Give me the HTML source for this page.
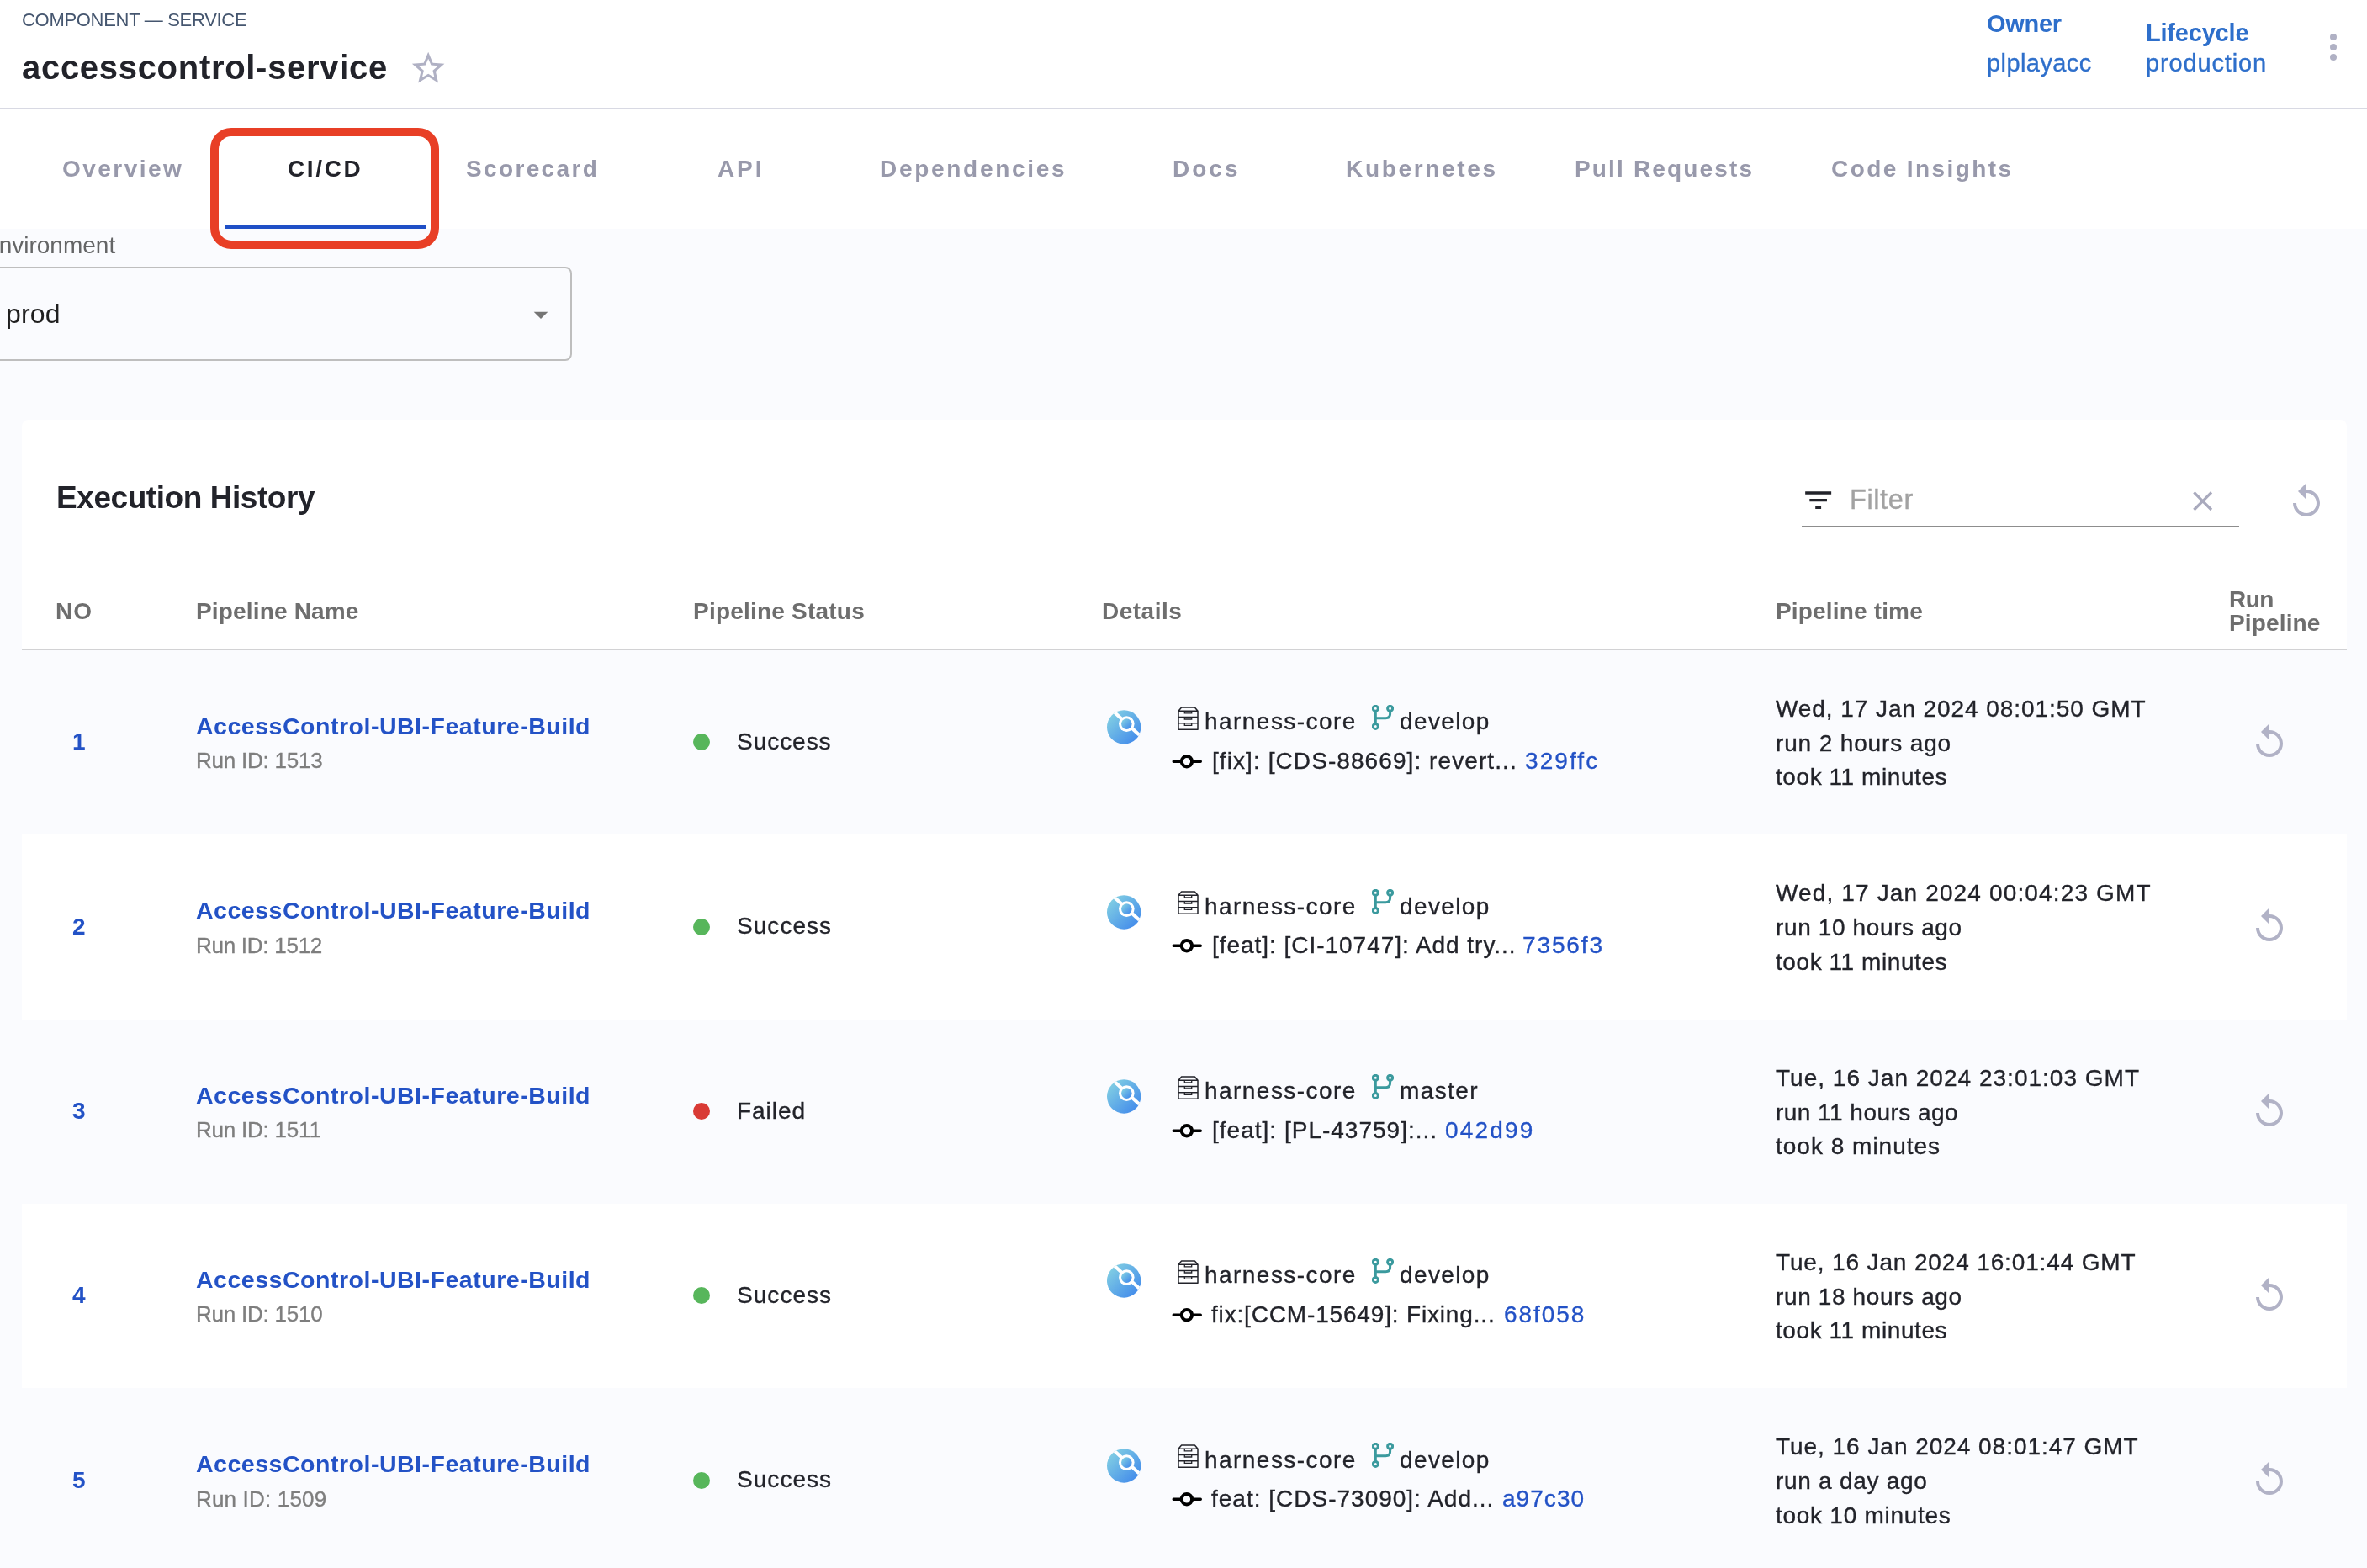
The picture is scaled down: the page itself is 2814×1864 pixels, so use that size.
<!DOCTYPE html>
<html><head><meta charset="utf-8"><title>accesscontrol-service CI/CD</title>
<style>
html,body{margin:0;padding:0;width:2814px;height:1864px;overflow:hidden;background:#fafbfe;}
body{position:relative;font-family:"Liberation Sans",sans-serif;}
.t{position:absolute;white-space:nowrap;will-change:transform;}
.r{-webkit-text-stroke:0.35px currentColor;}
.b{position:absolute;display:block;}
</style></head><body>
<div class="b" style="left:0;top:0;width:2814px;height:272px;background:#fff"></div>
<div class="b" style="left:0;top:128px;width:2814px;height:2px;background:#d8d9e3"></div>
<div class="t" id="comp" style="left:26.0px;top:13.4px;font-size:22px;line-height:22px;color:#45566f;font-weight:400;letter-spacing:-0.300px;">COMPONENT — SERVICE</div>
<div class="t" id="title" style="left:26.0px;top:60.1px;font-size:40px;line-height:40px;color:#22232a;font-weight:700;letter-spacing:0.700px;">accesscontrol-service</div>
<svg class="b" style="left:485.6px;top:57.6px;" width="46.3" height="46.3" viewBox="0 0 24 24"><path d="M22 9.24l-7.19-.62L12 2 9.19 8.63 2 9.24l5.46 4.73L5.82 21 12 17.27 18.18 21l-1.63-7.03L22 9.24zM12 15.4l-3.76 2.27 1-4.28-3.32-2.88 4.38-.38L12 6.1l1.71 4.04 4.38.38-3.32 2.88 1 4.28L12 15.4z" fill="#b0b1c4"/></svg>
<div class="t" id="owner" style="left:2362.4px;top:14.3px;font-size:29px;line-height:29px;color:#2e6fcb;font-weight:700;letter-spacing:-0.300px;">Owner</div>
<div class="t r" id="ownerv" style="left:2362.4px;top:61.4px;font-size:29px;line-height:29px;color:#2e6fcb;font-weight:400;letter-spacing:0.425px;">plplayacc</div>
<div class="t" id="life" style="left:2551.0px;top:25.4px;font-size:29px;line-height:29px;color:#2e6fcb;font-weight:700;letter-spacing:-0.200px;">Lifecycle</div>
<div class="t r" id="lifev" style="left:2551.0px;top:60.7px;font-size:29px;line-height:29px;color:#2e6fcb;font-weight:400;letter-spacing:0.844px;">production</div>
<div class="b" style="left:2770px;top:40.2px;width:8px;height:8px;border-radius:50%;background:#b0b1c4"></div>
<div class="b" style="left:2770px;top:52.2px;width:8px;height:8px;border-radius:50%;background:#b0b1c4"></div>
<div class="b" style="left:2770px;top:64.2px;width:8px;height:8px;border-radius:50%;background:#b0b1c4"></div>
<div class="t" id="tab0" style="left:74.0px;top:187.3px;font-size:28px;line-height:28px;color:#9899ab;font-weight:700;letter-spacing:2.457px;">Overview</div>
<div class="t" id="tab1" style="left:341.6px;top:187.3px;font-size:28px;line-height:28px;color:#22232a;font-weight:700;letter-spacing:2.650px;">CI/CD</div>
<div class="t" id="tab2" style="left:554.0px;top:187.3px;font-size:28px;line-height:28px;color:#9899ab;font-weight:700;letter-spacing:2.350px;">Scorecard</div>
<div class="t" id="tab3" style="left:852.6px;top:187.3px;font-size:28px;line-height:28px;color:#9899ab;font-weight:700;letter-spacing:2.900px;">API</div>
<div class="t" id="tab4" style="left:1045.8px;top:187.3px;font-size:28px;line-height:28px;color:#9899ab;font-weight:700;letter-spacing:2.709px;">Dependencies</div>
<div class="t" id="tab5" style="left:1394.0px;top:187.3px;font-size:28px;line-height:28px;color:#9899ab;font-weight:700;letter-spacing:3.000px;">Docs</div>
<div class="t" id="tab6" style="left:1600.0px;top:187.3px;font-size:28px;line-height:28px;color:#9899ab;font-weight:700;letter-spacing:2.667px;">Kubernetes</div>
<div class="t" id="tab7" style="left:1872.0px;top:187.3px;font-size:28px;line-height:28px;color:#9899ab;font-weight:700;letter-spacing:2.167px;">Pull Requests</div>
<div class="t" id="tab8" style="left:2177.0px;top:187.3px;font-size:28px;line-height:28px;color:#9899ab;font-weight:700;letter-spacing:2.417px;">Code Insights</div>
<div class="b" style="left:267px;top:268px;width:240px;height:4px;background:#1f4fc6"></div>
<div class="b" style="left:0;top:272px;width:2814px;height:1592px;background:#fafbfe"></div>
<div class="t" id="env" style="right:2676.7px;top:278.1px;font-size:28px;line-height:28px;color:#646566;font-weight:400;letter-spacing:0.000px;">Environment</div>
<div class="b" style="left:-12px;top:317px;width:692px;height:112px;box-sizing:border-box;border:2px solid #bebebe;border-radius:8px"></div>
<div class="t" id="prod" style="left:6.9px;top:356.9px;font-size:32px;line-height:32px;color:#1f1f1f;font-weight:400;letter-spacing:0.133px;">prod</div>
<svg class="b" style="left:623px;top:354px;" width="40" height="40" viewBox="0 0 24 24"><path d="M7 10l5 5 5-5z" fill="#757575"/></svg>
<div class="b" style="left:26px;top:499px;width:2764px;height:1400px;background:#fff;border-radius:8px"></div>
<div class="t" id="exh" style="left:66.5px;top:573.2px;font-size:37px;line-height:37px;color:#22232a;font-weight:700;letter-spacing:-0.438px;">Execution History</div>
<svg class="b" style="left:2140.8px;top:574.3px;" width="41.3" height="41.3" viewBox="0 0 24 24"><path d="M10 18h4v-2h-4v2zM3 6v2h18V6H3zm3 7h12v-2H6v2z" fill="#22232a"/></svg>
<div class="t r" id="filter" style="left:2199.0px;top:577.5px;font-size:32.5px;line-height:32.5px;color:#a2a2a2;font-weight:400;letter-spacing:0.600px;">Filter</div>
<svg class="b" style="left:2598.8px;top:575.5px;" width="39.4" height="39.4" viewBox="0 0 24 24"><path d="M19 6.41L17.59 5 12 10.59 6.41 5 5 6.41 10.59 12 5 17.59 6.41 19 12 13.41 17.59 19 19 17.59 13.41 12z" fill="#a9aabd"/></svg>
<div class="b" style="left:2142px;top:624.5px;width:520px;height:2px;background:#8d8d8d"></div>
<svg class="b" style="left:2717.5px;top:571.5px;" width="48" height="48" viewBox="0 0 24 24"><path d="M12 5V1L7 6l5 5V7c3.31 0 6 2.69 6 6s-2.69 6-6 6-6-2.69-6-6H4c0 4.42 3.58 8 8 8s8-3.58 8-8-3.58-8-8-8z" fill="#b1b2c6"/></svg>
<div class="t" id="h0" style="left:66.0px;top:713.3px;font-size:28px;line-height:28px;color:#6e6e6e;font-weight:700;letter-spacing:1.000px;">NO</div>
<div class="t" id="h1" style="left:232.5px;top:713.3px;font-size:28px;line-height:28px;color:#6e6e6e;font-weight:700;letter-spacing:0.167px;">Pipeline Name</div>
<div class="t" id="h2" style="left:824.0px;top:713.3px;font-size:28px;line-height:28px;color:#6e6e6e;font-weight:700;letter-spacing:0.214px;">Pipeline Status</div>
<div class="t" id="h3" style="left:1310.0px;top:713.3px;font-size:28px;line-height:28px;color:#6e6e6e;font-weight:700;letter-spacing:0.500px;">Details</div>
<div class="t" id="h4" style="left:2111.0px;top:713.3px;font-size:28px;line-height:28px;color:#6e6e6e;font-weight:700;letter-spacing:0.167px;">Pipeline time</div>
<div class="t" id="h5" style="left:2650.0px;top:698.7px;font-size:28px;line-height:28px;color:#6e6e6e;font-weight:700;letter-spacing:-0.500px;">Run</div>
<div class="t" id="h6" style="left:2650.0px;top:726.8px;font-size:28px;line-height:28px;color:#6e6e6e;font-weight:700;letter-spacing:0.143px;">Pipeline</div>
<div class="b" style="left:26px;top:771px;width:2764px;height:2px;background:#d2d2d4"></div>
<div class="b" style="left:26px;top:773.0px;width:2764px;height:219.33px;background:#fafbfe"></div>
<div class="t" id="no0" style="left:85.6px;top:868.3px;font-size:28px;line-height:28px;color:#2352c6;font-weight:700;letter-spacing:0.000px;">1</div>
<div class="t" id="name0" style="left:232.6px;top:849.1px;font-size:28.5px;line-height:28.5px;color:#2352c6;font-weight:700;letter-spacing:0.520px;">AccessControl-UBI-Feature-Build</div>
<div class="t r" id="rid0" style="left:232.6px;top:891.2px;font-size:26px;line-height:26px;color:#7e7e7e;font-weight:400;letter-spacing:-0.218px;">Run ID: 1513</div>
<div class="b" style="left:824px;top:872.3px;width:20px;height:20px;border-radius:50%;background:#57b65b"></div>
<div class="t r" id="st0" style="left:876.3px;top:868.1px;font-size:28px;line-height:28px;color:#22232a;font-weight:400;letter-spacing:0.967px;">Success</div>
<svg class="b" style="left:1315.8px;top:844.3px;" width="41" height="41" viewBox="0 0 41 41"><defs><linearGradient id="dg0" x1="0" y1="0" x2="1" y2="1"><stop offset="0" stop-color="#8ad8e2"/><stop offset="1" stop-color="#3a82ec"/></linearGradient><clipPath id="dc0"><circle cx="20.2" cy="20.45" r="20.2"/></clipPath></defs>
<circle cx="20.2" cy="20.45" r="20.2" fill="url(#dg0)"/>
<line x1="4" y1="-1.6" x2="44" y2="34.7" stroke="#fff" stroke-width="4" clip-path="url(#dc0)"/>
<circle cx="23.3" cy="16.6" r="9.3" fill="#fff"/><circle cx="23.3" cy="16.6" r="6.3" fill="url(#dg0)"/></svg>
<svg class="b" style="left:1400px;top:840.0px;" width="25" height="28" viewBox="0 0 25 28"><path d="M1,27.2 V5.2 L4.6,1 H20.4 L24,5.2 V27.2 Z M1,5.2 H24 M1,12.4 H24 M1,19.8 H24" fill="none" stroke="#22232a" stroke-width="1.5" stroke-linejoin="round"/>
<path d="M8.3,5.4 V7.8 H16.7 V5.4 M8.3,12.6 V15 H16.7 V12.6 M8.3,20 V22.4 H16.7 V20" fill="none" stroke="#22232a" stroke-width="1.3"/></svg>
<div class="t r" id="repo0" style="left:1432.0px;top:844.3px;font-size:28px;line-height:28px;color:#22232a;font-weight:400;letter-spacing:1.455px;">harness-core</div>
<svg class="b" style="left:1631px;top:838.0px;" width="26" height="30" viewBox="0 0 26 30"><g fill="none" stroke="#3b9a9e" stroke-width="3"><circle cx="4.3" cy="4.3" r="3"/><circle cx="21.6" cy="4.3" r="3"/><circle cx="4.3" cy="25.4" r="3"/>
<path d="M4.3,7.3 V22.4 M21.6,7.3 V10.5 Q21.6,15.8 16.3,15.8 H4.3"/></g></svg>
<div class="t r" id="br0" style="left:1663.5px;top:844.3px;font-size:28px;line-height:28px;color:#22232a;font-weight:400;letter-spacing:1.367px;">develop</div>
<svg class="b" style="left:1393px;top:895.0px;" width="36" height="20" viewBox="0 0 36 20"><g fill="none" stroke="#000" ><circle cx="17.9" cy="10.2" r="6.2" stroke-width="4"/><path d="M2.2,10.2 H11.5 M24.3,10.2 H34.3" stroke-width="3.4" stroke-linecap="round"/></g></svg>
<div class="t r" id="msg0" style="left:1440.7px;top:891.1px;font-size:28px;line-height:28px;color:#22232a;font-weight:400;letter-spacing:1.079px;">[fix]: [CDS-88669]: revert...</div>
<div class="t r" id="sha0" style="left:1813.4px;top:891.1px;font-size:28px;line-height:28px;color:#2352c6;font-weight:400;letter-spacing:2.080px;">329ffc</div>
<div class="t r" id="tm0a" style="left:2111.0px;top:829.1px;font-size:28px;line-height:28px;color:#22232a;font-weight:400;letter-spacing:0.929px;">Wed, 17 Jan 2024 08:01:50 GMT</div>
<div class="t r" id="tm0b" style="left:2111.0px;top:869.8px;font-size:28px;line-height:28px;color:#22232a;font-weight:400;letter-spacing:0.857px;">run 2 hours ago</div>
<div class="t r" id="tm0c" style="left:2111.0px;top:910.2px;font-size:28px;line-height:28px;color:#22232a;font-weight:400;letter-spacing:0.571px;">took 11 minutes</div>
<svg class="b" style="left:2674px;top:858.0px;" width="48" height="48" viewBox="0 0 24 24"><path d="M12 5V1L7 6l5 5V7c3.31 0 6 2.69 6 6s-2.69 6-6 6-6-2.69-6-6H4c0 4.42 3.58 8 8 8s8-3.58 8-8-3.58-8-8-8z" fill="#b1b2c6"/></svg>
<div class="t" id="no1" style="left:85.6px;top:1087.6px;font-size:28px;line-height:28px;color:#2352c6;font-weight:700;letter-spacing:0.000px;">2</div>
<div class="t" id="name1" style="left:232.6px;top:1068.4px;font-size:28.5px;line-height:28.5px;color:#2352c6;font-weight:700;letter-spacing:0.520px;">AccessControl-UBI-Feature-Build</div>
<div class="t r" id="rid1" style="left:232.6px;top:1110.5px;font-size:26px;line-height:26px;color:#7e7e7e;font-weight:400;letter-spacing:-0.264px;">Run ID: 1512</div>
<div class="b" style="left:824px;top:1091.63px;width:20px;height:20px;border-radius:50%;background:#57b65b"></div>
<div class="t r" id="st1" style="left:876.3px;top:1087.4px;font-size:28px;line-height:28px;color:#22232a;font-weight:400;letter-spacing:1.050px;">Success</div>
<svg class="b" style="left:1315.8px;top:1063.63px;" width="41" height="41" viewBox="0 0 41 41"><defs><linearGradient id="dg1" x1="0" y1="0" x2="1" y2="1"><stop offset="0" stop-color="#8ad8e2"/><stop offset="1" stop-color="#3a82ec"/></linearGradient><clipPath id="dc1"><circle cx="20.2" cy="20.45" r="20.2"/></clipPath></defs>
<circle cx="20.2" cy="20.45" r="20.2" fill="url(#dg1)"/>
<line x1="4" y1="-1.6" x2="44" y2="34.7" stroke="#fff" stroke-width="4" clip-path="url(#dc1)"/>
<circle cx="23.3" cy="16.6" r="9.3" fill="#fff"/><circle cx="23.3" cy="16.6" r="6.3" fill="url(#dg1)"/></svg>
<svg class="b" style="left:1400px;top:1059.33px;" width="25" height="28" viewBox="0 0 25 28"><path d="M1,27.2 V5.2 L4.6,1 H20.4 L24,5.2 V27.2 Z M1,5.2 H24 M1,12.4 H24 M1,19.8 H24" fill="none" stroke="#22232a" stroke-width="1.5" stroke-linejoin="round"/>
<path d="M8.3,5.4 V7.8 H16.7 V5.4 M8.3,12.6 V15 H16.7 V12.6 M8.3,20 V22.4 H16.7 V20" fill="none" stroke="#22232a" stroke-width="1.3"/></svg>
<div class="t r" id="repo1" style="left:1432.0px;top:1063.6px;font-size:28px;line-height:28px;color:#22232a;font-weight:400;letter-spacing:1.455px;">harness-core</div>
<svg class="b" style="left:1631px;top:1057.33px;" width="26" height="30" viewBox="0 0 26 30"><g fill="none" stroke="#3b9a9e" stroke-width="3"><circle cx="4.3" cy="4.3" r="3"/><circle cx="21.6" cy="4.3" r="3"/><circle cx="4.3" cy="25.4" r="3"/>
<path d="M4.3,7.3 V22.4 M21.6,7.3 V10.5 Q21.6,15.8 16.3,15.8 H4.3"/></g></svg>
<div class="t r" id="br1" style="left:1663.5px;top:1063.6px;font-size:28px;line-height:28px;color:#22232a;font-weight:400;letter-spacing:1.367px;">develop</div>
<svg class="b" style="left:1393px;top:1114.33px;" width="36" height="20" viewBox="0 0 36 20"><g fill="none" stroke="#000" ><circle cx="17.9" cy="10.2" r="6.2" stroke-width="4"/><path d="M2.2,10.2 H11.5 M24.3,10.2 H34.3" stroke-width="3.4" stroke-linecap="round"/></g></svg>
<div class="t r" id="msg1" style="left:1441.0px;top:1110.4px;font-size:28px;line-height:28px;color:#22232a;font-weight:400;letter-spacing:0.966px;">[feat]: [CI-10747]: Add try...</div>
<div class="t r" id="sha1" style="left:1810.0px;top:1110.4px;font-size:28px;line-height:28px;color:#2352c6;font-weight:400;letter-spacing:1.880px;">7356f3</div>
<div class="t r" id="tm1a" style="left:2111.0px;top:1048.4px;font-size:28px;line-height:28px;color:#22232a;font-weight:400;letter-spacing:1.143px;">Wed, 17 Jan 2024 00:04:23 GMT</div>
<div class="t r" id="tm1b" style="left:2111.0px;top:1089.1px;font-size:28px;line-height:28px;color:#22232a;font-weight:400;letter-spacing:0.627px;">run 10 hours ago</div>
<div class="t r" id="tm1c" style="left:2111.0px;top:1129.5px;font-size:28px;line-height:28px;color:#22232a;font-weight:400;letter-spacing:0.571px;">took 11 minutes</div>
<svg class="b" style="left:2674px;top:1077.33px;" width="48" height="48" viewBox="0 0 24 24"><path d="M12 5V1L7 6l5 5V7c3.31 0 6 2.69 6 6s-2.69 6-6 6-6-2.69-6-6H4c0 4.42 3.58 8 8 8s8-3.58 8-8-3.58-8-8-8z" fill="#b1b2c6"/></svg>
<div class="b" style="left:26px;top:1211.66px;width:2764px;height:219.33px;background:#fafbfe"></div>
<div class="t" id="no2" style="left:85.6px;top:1307.0px;font-size:28px;line-height:28px;color:#2352c6;font-weight:700;letter-spacing:0.000px;">3</div>
<div class="t" id="name2" style="left:232.6px;top:1287.7px;font-size:28.5px;line-height:28.5px;color:#2352c6;font-weight:700;letter-spacing:0.520px;">AccessControl-UBI-Feature-Build</div>
<div class="t r" id="rid2" style="left:232.6px;top:1329.8px;font-size:26px;line-height:26px;color:#7e7e7e;font-weight:400;letter-spacing:-0.218px;">Run ID: 1511</div>
<div class="b" style="left:824px;top:1310.96px;width:20px;height:20px;border-radius:50%;background:#d93a35"></div>
<div class="t r" id="st2" style="left:876.3px;top:1306.8px;font-size:28px;line-height:28px;color:#22232a;font-weight:400;letter-spacing:0.940px;">Failed</div>
<svg class="b" style="left:1315.8px;top:1282.96px;" width="41" height="41" viewBox="0 0 41 41"><defs><linearGradient id="dg2" x1="0" y1="0" x2="1" y2="1"><stop offset="0" stop-color="#8ad8e2"/><stop offset="1" stop-color="#3a82ec"/></linearGradient><clipPath id="dc2"><circle cx="20.2" cy="20.45" r="20.2"/></clipPath></defs>
<circle cx="20.2" cy="20.45" r="20.2" fill="url(#dg2)"/>
<line x1="4" y1="-1.6" x2="44" y2="34.7" stroke="#fff" stroke-width="4" clip-path="url(#dc2)"/>
<circle cx="23.3" cy="16.6" r="9.3" fill="#fff"/><circle cx="23.3" cy="16.6" r="6.3" fill="url(#dg2)"/></svg>
<svg class="b" style="left:1400px;top:1278.66px;" width="25" height="28" viewBox="0 0 25 28"><path d="M1,27.2 V5.2 L4.6,1 H20.4 L24,5.2 V27.2 Z M1,5.2 H24 M1,12.4 H24 M1,19.8 H24" fill="none" stroke="#22232a" stroke-width="1.5" stroke-linejoin="round"/>
<path d="M8.3,5.4 V7.8 H16.7 V5.4 M8.3,12.6 V15 H16.7 V12.6 M8.3,20 V22.4 H16.7 V20" fill="none" stroke="#22232a" stroke-width="1.3"/></svg>
<div class="t r" id="repo2" style="left:1432.0px;top:1283.0px;font-size:28px;line-height:28px;color:#22232a;font-weight:400;letter-spacing:1.455px;">harness-core</div>
<svg class="b" style="left:1631px;top:1276.66px;" width="26" height="30" viewBox="0 0 26 30"><g fill="none" stroke="#3b9a9e" stroke-width="3"><circle cx="4.3" cy="4.3" r="3"/><circle cx="21.6" cy="4.3" r="3"/><circle cx="4.3" cy="25.4" r="3"/>
<path d="M4.3,7.3 V22.4 M21.6,7.3 V10.5 Q21.6,15.8 16.3,15.8 H4.3"/></g></svg>
<div class="t r" id="br2" style="left:1663.5px;top:1283.0px;font-size:28px;line-height:28px;color:#22232a;font-weight:400;letter-spacing:1.380px;">master</div>
<svg class="b" style="left:1393px;top:1333.66px;" width="36" height="20" viewBox="0 0 36 20"><g fill="none" stroke="#000" ><circle cx="17.9" cy="10.2" r="6.2" stroke-width="4"/><path d="M2.2,10.2 H11.5 M24.3,10.2 H34.3" stroke-width="3.4" stroke-linecap="round"/></g></svg>
<div class="t r" id="msg2" style="left:1441.3px;top:1329.8px;font-size:28px;line-height:28px;color:#22232a;font-weight:400;letter-spacing:1.010px;">[feat]: [PL-43759]:...</div>
<div class="t r" id="sha2" style="left:1718.0px;top:1329.8px;font-size:28px;line-height:28px;color:#2352c6;font-weight:400;letter-spacing:2.200px;">042d99</div>
<div class="t r" id="tm2a" style="left:2111.0px;top:1267.8px;font-size:28px;line-height:28px;color:#22232a;font-weight:400;letter-spacing:1.014px;">Tue, 16 Jan 2024 23:01:03 GMT</div>
<div class="t r" id="tm2b" style="left:2111.0px;top:1308.5px;font-size:28px;line-height:28px;color:#22232a;font-weight:400;letter-spacing:0.467px;">run 11 hours ago</div>
<div class="t r" id="tm2c" style="left:2111.0px;top:1348.9px;font-size:28px;line-height:28px;color:#22232a;font-weight:400;letter-spacing:1.000px;">took 8 minutes</div>
<svg class="b" style="left:2674px;top:1296.66px;" width="48" height="48" viewBox="0 0 24 24"><path d="M12 5V1L7 6l5 5V7c3.31 0 6 2.69 6 6s-2.69 6-6 6-6-2.69-6-6H4c0 4.42 3.58 8 8 8s8-3.58 8-8-3.58-8-8-8z" fill="#b1b2c6"/></svg>
<div class="t" id="no3" style="left:85.6px;top:1526.3px;font-size:28px;line-height:28px;color:#2352c6;font-weight:700;letter-spacing:0.000px;">4</div>
<div class="t" id="name3" style="left:232.6px;top:1507.1px;font-size:28.5px;line-height:28.5px;color:#2352c6;font-weight:700;letter-spacing:0.520px;">AccessControl-UBI-Feature-Build</div>
<div class="t r" id="rid3" style="left:232.6px;top:1549.2px;font-size:26px;line-height:26px;color:#7e7e7e;font-weight:400;letter-spacing:-0.218px;">Run ID: 1510</div>
<div class="b" style="left:824px;top:1530.29px;width:20px;height:20px;border-radius:50%;background:#57b65b"></div>
<div class="t r" id="st3" style="left:876.3px;top:1526.1px;font-size:28px;line-height:28px;color:#22232a;font-weight:400;letter-spacing:1.050px;">Success</div>
<svg class="b" style="left:1315.8px;top:1502.29px;" width="41" height="41" viewBox="0 0 41 41"><defs><linearGradient id="dg3" x1="0" y1="0" x2="1" y2="1"><stop offset="0" stop-color="#8ad8e2"/><stop offset="1" stop-color="#3a82ec"/></linearGradient><clipPath id="dc3"><circle cx="20.2" cy="20.45" r="20.2"/></clipPath></defs>
<circle cx="20.2" cy="20.45" r="20.2" fill="url(#dg3)"/>
<line x1="4" y1="-1.6" x2="44" y2="34.7" stroke="#fff" stroke-width="4" clip-path="url(#dc3)"/>
<circle cx="23.3" cy="16.6" r="9.3" fill="#fff"/><circle cx="23.3" cy="16.6" r="6.3" fill="url(#dg3)"/></svg>
<svg class="b" style="left:1400px;top:1497.99px;" width="25" height="28" viewBox="0 0 25 28"><path d="M1,27.2 V5.2 L4.6,1 H20.4 L24,5.2 V27.2 Z M1,5.2 H24 M1,12.4 H24 M1,19.8 H24" fill="none" stroke="#22232a" stroke-width="1.5" stroke-linejoin="round"/>
<path d="M8.3,5.4 V7.8 H16.7 V5.4 M8.3,12.6 V15 H16.7 V12.6 M8.3,20 V22.4 H16.7 V20" fill="none" stroke="#22232a" stroke-width="1.3"/></svg>
<div class="t r" id="repo3" style="left:1432.0px;top:1502.3px;font-size:28px;line-height:28px;color:#22232a;font-weight:400;letter-spacing:1.455px;">harness-core</div>
<svg class="b" style="left:1631px;top:1495.99px;" width="26" height="30" viewBox="0 0 26 30"><g fill="none" stroke="#3b9a9e" stroke-width="3"><circle cx="4.3" cy="4.3" r="3"/><circle cx="21.6" cy="4.3" r="3"/><circle cx="4.3" cy="25.4" r="3"/>
<path d="M4.3,7.3 V22.4 M21.6,7.3 V10.5 Q21.6,15.8 16.3,15.8 H4.3"/></g></svg>
<div class="t r" id="br3" style="left:1663.5px;top:1502.3px;font-size:28px;line-height:28px;color:#22232a;font-weight:400;letter-spacing:1.367px;">develop</div>
<svg class="b" style="left:1393px;top:1552.99px;" width="36" height="20" viewBox="0 0 36 20"><g fill="none" stroke="#000" ><circle cx="17.9" cy="10.2" r="6.2" stroke-width="4"/><path d="M2.2,10.2 H11.5 M24.3,10.2 H34.3" stroke-width="3.4" stroke-linecap="round"/></g></svg>
<div class="t r" id="msg3" style="left:1440.0px;top:1549.1px;font-size:28px;line-height:28px;color:#22232a;font-weight:400;letter-spacing:0.832px;">fix:[CCM-15649]: Fixing...</div>
<div class="t r" id="sha3" style="left:1787.6px;top:1549.1px;font-size:28px;line-height:28px;color:#2352c6;font-weight:400;letter-spacing:1.920px;">68f058</div>
<div class="t r" id="tm3a" style="left:2111.0px;top:1487.1px;font-size:28px;line-height:28px;color:#22232a;font-weight:400;letter-spacing:0.857px;">Tue, 16 Jan 2024 16:01:44 GMT</div>
<div class="t r" id="tm3b" style="left:2111.0px;top:1527.8px;font-size:28px;line-height:28px;color:#22232a;font-weight:400;letter-spacing:0.627px;">run 18 hours ago</div>
<div class="t r" id="tm3c" style="left:2111.0px;top:1568.2px;font-size:28px;line-height:28px;color:#22232a;font-weight:400;letter-spacing:0.571px;">took 11 minutes</div>
<svg class="b" style="left:2674px;top:1515.99px;" width="48" height="48" viewBox="0 0 24 24"><path d="M12 5V1L7 6l5 5V7c3.31 0 6 2.69 6 6s-2.69 6-6 6-6-2.69-6-6H4c0 4.42 3.58 8 8 8s8-3.58 8-8-3.58-8-8-8z" fill="#b1b2c6"/></svg>
<div class="b" style="left:26px;top:1650.32px;width:2764px;height:219.33px;background:#fafbfe"></div>
<div class="t" id="no4" style="left:85.6px;top:1745.6px;font-size:28px;line-height:28px;color:#2352c6;font-weight:700;letter-spacing:0.000px;">5</div>
<div class="t" id="name4" style="left:232.6px;top:1726.4px;font-size:28.5px;line-height:28.5px;color:#2352c6;font-weight:700;letter-spacing:0.520px;">AccessControl-UBI-Feature-Build</div>
<div class="t r" id="rid4" style="left:232.6px;top:1768.5px;font-size:26px;line-height:26px;color:#7e7e7e;font-weight:400;letter-spacing:0.173px;">Run ID: 1509</div>
<div class="b" style="left:824px;top:1749.62px;width:20px;height:20px;border-radius:50%;background:#57b65b"></div>
<div class="t r" id="st4" style="left:876.3px;top:1745.4px;font-size:28px;line-height:28px;color:#22232a;font-weight:400;letter-spacing:1.050px;">Success</div>
<svg class="b" style="left:1315.8px;top:1721.62px;" width="41" height="41" viewBox="0 0 41 41"><defs><linearGradient id="dg4" x1="0" y1="0" x2="1" y2="1"><stop offset="0" stop-color="#8ad8e2"/><stop offset="1" stop-color="#3a82ec"/></linearGradient><clipPath id="dc4"><circle cx="20.2" cy="20.45" r="20.2"/></clipPath></defs>
<circle cx="20.2" cy="20.45" r="20.2" fill="url(#dg4)"/>
<line x1="4" y1="-1.6" x2="44" y2="34.7" stroke="#fff" stroke-width="4" clip-path="url(#dc4)"/>
<circle cx="23.3" cy="16.6" r="9.3" fill="#fff"/><circle cx="23.3" cy="16.6" r="6.3" fill="url(#dg4)"/></svg>
<svg class="b" style="left:1400px;top:1717.32px;" width="25" height="28" viewBox="0 0 25 28"><path d="M1,27.2 V5.2 L4.6,1 H20.4 L24,5.2 V27.2 Z M1,5.2 H24 M1,12.4 H24 M1,19.8 H24" fill="none" stroke="#22232a" stroke-width="1.5" stroke-linejoin="round"/>
<path d="M8.3,5.4 V7.8 H16.7 V5.4 M8.3,12.6 V15 H16.7 V12.6 M8.3,20 V22.4 H16.7 V20" fill="none" stroke="#22232a" stroke-width="1.3"/></svg>
<div class="t r" id="repo4" style="left:1432.0px;top:1721.6px;font-size:28px;line-height:28px;color:#22232a;font-weight:400;letter-spacing:1.455px;">harness-core</div>
<svg class="b" style="left:1631px;top:1715.32px;" width="26" height="30" viewBox="0 0 26 30"><g fill="none" stroke="#3b9a9e" stroke-width="3"><circle cx="4.3" cy="4.3" r="3"/><circle cx="21.6" cy="4.3" r="3"/><circle cx="4.3" cy="25.4" r="3"/>
<path d="M4.3,7.3 V22.4 M21.6,7.3 V10.5 Q21.6,15.8 16.3,15.8 H4.3"/></g></svg>
<div class="t r" id="br4" style="left:1663.5px;top:1721.6px;font-size:28px;line-height:28px;color:#22232a;font-weight:400;letter-spacing:1.367px;">develop</div>
<svg class="b" style="left:1393px;top:1772.32px;" width="36" height="20" viewBox="0 0 36 20"><g fill="none" stroke="#000" ><circle cx="17.9" cy="10.2" r="6.2" stroke-width="4"/><path d="M2.2,10.2 H11.5 M24.3,10.2 H34.3" stroke-width="3.4" stroke-linecap="round"/></g></svg>
<div class="t r" id="msg4" style="left:1440.0px;top:1768.4px;font-size:28px;line-height:28px;color:#22232a;font-weight:400;letter-spacing:1.000px;">feat: [CDS-73090]: Add...</div>
<div class="t r" id="sha4" style="left:1785.8px;top:1768.4px;font-size:28px;line-height:28px;color:#2352c6;font-weight:400;letter-spacing:1.040px;">a97c30</div>
<div class="t r" id="tm4a" style="left:2111.0px;top:1706.4px;font-size:28px;line-height:28px;color:#22232a;font-weight:400;letter-spacing:0.964px;">Tue, 16 Jan 2024 08:01:47 GMT</div>
<div class="t r" id="tm4b" style="left:2111.0px;top:1747.1px;font-size:28px;line-height:28px;color:#22232a;font-weight:400;letter-spacing:0.717px;">run a day ago</div>
<div class="t r" id="tm4c" style="left:2111.0px;top:1787.5px;font-size:28px;line-height:28px;color:#22232a;font-weight:400;letter-spacing:0.729px;">took 10 minutes</div>
<svg class="b" style="left:2674px;top:1735.32px;" width="48" height="48" viewBox="0 0 24 24"><path d="M12 5V1L7 6l5 5V7c3.31 0 6 2.69 6 6s-2.69 6-6 6-6-2.69-6-6H4c0 4.42 3.58 8 8 8s8-3.58 8-8-3.58-8-8-8z" fill="#b1b2c6"/></svg>
<div class="b" style="left:249.6px;top:151.8px;width:272px;height:144.2px;box-sizing:border-box;border:10px solid #e83f26;border-radius:25px"></div>
</body></html>
